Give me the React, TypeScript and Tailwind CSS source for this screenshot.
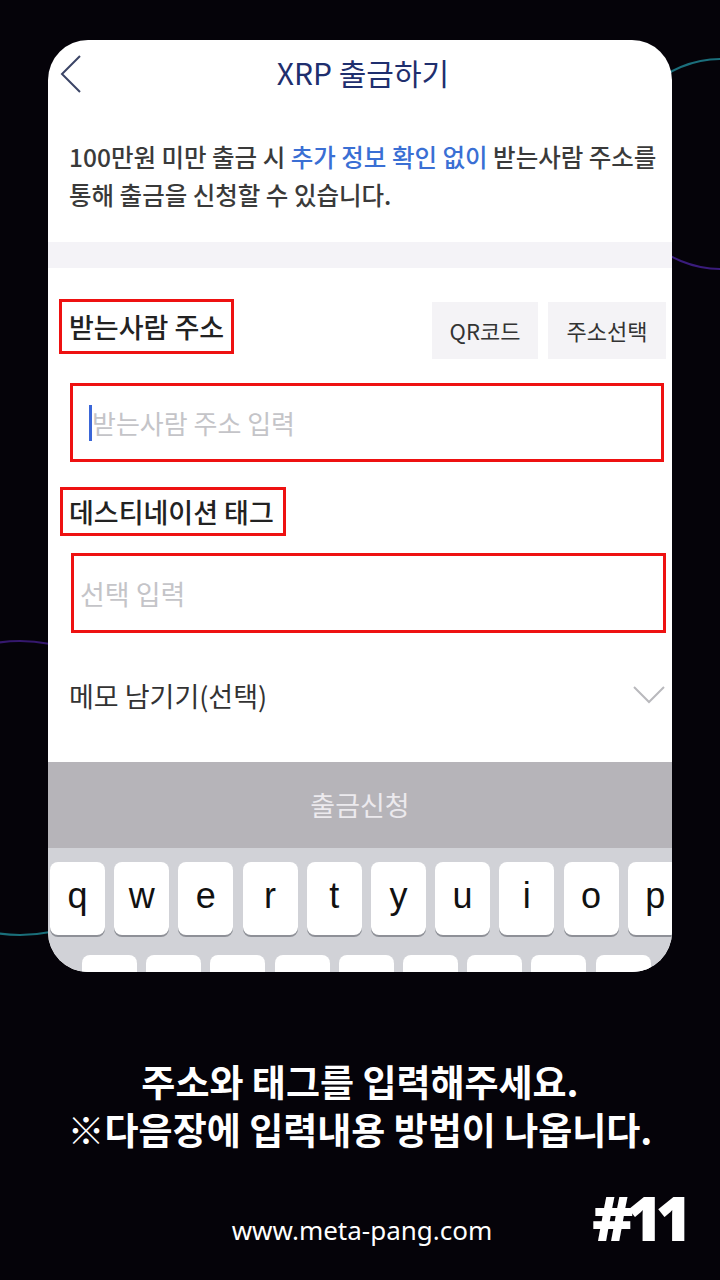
import React from 'react';

const kr = { fontFamily: '"Noto Sans CJK KR", "Noto Sans", sans-serif' };

const row1 = ['q', 'w', 'e', 'r', 't', 'y', 'u', 'i', 'o', 'p'];
const row2 = ['a', 's', 'd', 'f', 'g', 'h', 'j', 'k', 'l'];

function Key({ k }: { k: string }) {
  return (
    <div
      className="w-[55px] h-[73px] shrink-0 rounded-[8px] bg-white shadow-[0_2px_0_#8e9097] flex items-center justify-center text-[36px] text-[#111] leading-none pb-[6px]"
      style={{ fontFamily: '"Liberation Sans", Arial, sans-serif' }}
    >
      {k}
    </div>
  );
}

export default function App() {
  return (
    <div className="relative w-[720px] h-[1280px] overflow-hidden bg-[#050309] flex flex-col" style={kr}>
      {/* decorative rings */}
      <div className="absolute left-[615px] top-[58px] w-[212px] h-[212px] rounded-full border-2 border-[#1b6f7c] border-b-[#3a1c7c] border-r-[#24407a]" />
      <div className="absolute left-[-128px] top-[640px] w-[296px] h-[296px] rounded-full border-2 border-[#35186e] border-b-[#1a6f7a] border-l-[#253c78]" />

      {/* phone card */}
      <div className="relative shrink-0 mt-[40px] mx-[48px] h-[932px] rounded-[40px] bg-white overflow-hidden flex flex-col">
        <div className="relative shrink-0 h-[64px] flex items-center justify-center">
          <svg className="absolute left-[12px] top-[15px]" width="22" height="38" viewBox="0 0 22 38" fill="none">
            <polyline points="20,1 2,19 20,37" stroke="#3b4466" strokeWidth="2" />
          </svg>
          <span className="ml-[6px] text-[30px] leading-none text-[#1f2f6e]">XRP 출금하기</span>
        </div>

        <p className="shrink-0 mt-[34px] px-[21px] text-[24.5px] font-medium leading-[38px] text-[#3a3a3a] whitespace-nowrap">
          100만원 미만 출금 시 <span className="text-[#3a6fd4]">추가 정보 확인 없이</span> 받는사람 주소를
          <br />
          통해 출금을 신청할 수 있습니다.
        </p>

        <div className="shrink-0 mt-[28px] h-[26px] bg-[#f4f3f7]" />

        <div className="shrink-0 mt-[31px] h-[60px] flex items-start pl-[11px] pr-[6px]">
          <div className="h-[55px] w-[175px] border-[3px] border-[#ee1111] flex items-center pl-[7px] text-[27px] font-medium leading-none text-[#222] whitespace-nowrap">
            받는사람 주소
          </div>
          <div className="ml-auto mt-[3px] flex gap-[10px]">
            <div className="w-[106px] h-[57px] bg-[#f4f3f6] flex items-center justify-center text-[22px] text-[#333]">QR코드</div>
            <div className="w-[118px] h-[57px] bg-[#f4f3f6] flex items-center justify-center text-[22px] text-[#333]">주소선택</div>
          </div>
        </div>

        <div className="shrink-0 mt-[24px] ml-[22px] w-[594px] h-[79px] border-[3px] border-[#ee1111] flex items-center pl-[16px]">
          <div className="w-[3px] h-[36px] bg-[#3a66d8]" />
          <span className="text-[26px] leading-none text-[#c4c4c8]">받는사람 주소 입력</span>
        </div>

        <div className="shrink-0 mt-[25px] ml-[12px] w-[226px] h-[49px] border-[3px] border-[#ee1111] flex items-center pl-[6px] text-[27px] font-medium leading-none text-[#222] whitespace-nowrap">
          데스티네이션 태그
        </div>

        <div className="shrink-0 mt-[17px] ml-[23px] w-[595px] h-[80px] border-[3px] border-[#ee1111] flex items-center pl-[6px]">
          <span className="text-[27px] leading-none text-[#c4c4c8]">선택 입력</span>
        </div>

        <div className="shrink-0 mt-[27px] h-[70px] flex items-center pl-[21px] pr-[7px]">
          <span className="text-[27px] leading-none text-[#333]">메모 남기기(선택)</span>
          <svg className="ml-auto" width="32" height="20" viewBox="0 0 32 20" fill="none">
            <polyline points="1,2 16,17 31,2" stroke="#b9b9bd" strokeWidth="2" />
          </svg>
        </div>

        <div className="shrink-0 mt-[32px] h-[86px] bg-[#b6b4b9] flex items-center justify-center text-[27px] text-[#eceaee]">
          출금신청
        </div>

        <div className="flex-1 bg-[#d1d2d7] pt-[14px] flex flex-col gap-[20px]">
          <div className="flex gap-[9.2px] pl-[2px]">
            {row1.map((k) => (
              <Key key={k} k={k} />
            ))}
          </div>
          <div className="flex gap-[9.2px] pl-[34px]">
            {row2.map((k) => (
              <Key key={k} k={k} />
            ))}
          </div>
        </div>
      </div>

      {/* caption */}
      <div className="shrink-0 mt-[90px] flex flex-col items-center gap-[10px] text-white font-bold text-[37px] leading-[38px] whitespace-nowrap">
        <span>주소와 태그를 입력해주세요.</span>
        <span>※다음장에 입력내용 방법이 나옵니다.</span>
      </div>

      <div className="shrink-0 mt-[63px] grid grid-cols-[1fr_auto_1fr] items-center">
        <div />
        <span className="ml-[4px] text-white text-[26px]" style={{ fontFamily: '"Noto Sans", sans-serif' }}>
          www.meta-pang.com
        </span>
        <span className="justify-self-end mr-[35px] -mt-[28px] text-white text-[62px] font-black leading-none tracking-[-7px]" style={{ fontFamily: '"Noto Sans", sans-serif' }}>
          #11
        </span>
      </div>
    </div>
  );
}
